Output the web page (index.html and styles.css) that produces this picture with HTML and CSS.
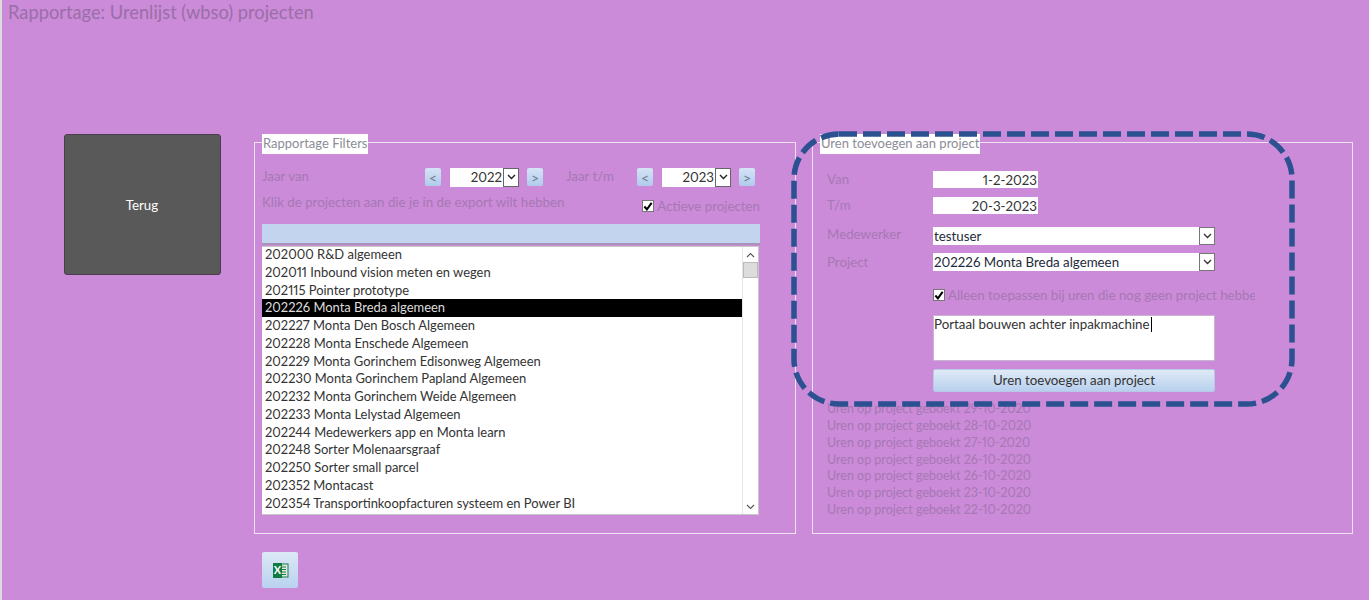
FILE: index.html
```html
<!DOCTYPE html>
<html lang="en">
  <head>
    <meta charset="UTF-8" />
    <title>Rapportage</title>
    <link rel="stylesheet" href="styles.css">
  </head>

  <body>
    <h1 class="title">Rapportage: Urenlijst (wbso) projecten</h1>

    <div class="main">
      <div class="back">Terug</div>

      <div class="left-col">
        <div class="panel">
          <div class="legend">Rapportage Filters</div>
          <div class="year-row">
            <span class="lbl year-lbl">Jaar van</span>
            <span class="step">&lt;</span>
            <span class="year-box"><span class="year-val">2022</span><span class="year-arrow"><svg width="9" height="6" viewBox="0 0 9 6"><path d="M1 1l3.5 3.5L8 1" fill="none" stroke="#222" stroke-width="1.4"/></svg></span></span>
            <span class="step">&gt;</span>
            <span class="lbl year-lbl2">Jaar t/m</span>
            <span class="step">&lt;</span>
            <span class="year-box"><span class="year-val">2023</span><span class="year-arrow"><svg width="9" height="6" viewBox="0 0 9 6"><path d="M1 1l3.5 3.5L8 1" fill="none" stroke="#222" stroke-width="1.4"/></svg></span></span>
            <span class="step">&gt;</span>
          </div>
          <div class="hint-row">
            <span class="lbl">Klik de projecten aan die je in de export wilt hebben</span>
            <span class="check-wrap">
              <span class="check"><svg width="11" height="11" viewBox="0 0 11 11"><path d="M1.5 5.5l2.8 3.2L9.5 1.5" fill="none" stroke="#000" stroke-width="2.2"/></svg></span>
              <span class="lbl">Actieve projecten</span>
            </span>
          </div>
          <div class="list-head"></div>
          <div class="list">
            <ul class="rows">
              <li>202000 R&amp;D algemeen</li>
              <li>202011 Inbound vision meten en wegen</li>
              <li>202115 Pointer prototype</li>
              <li class="sel">202226 Monta Breda algemeen</li>
              <li>202227 Monta Den Bosch Algemeen</li>
              <li>202228 Monta Enschede Algemeen</li>
              <li>202229 Monta Gorinchem Edisonweg Algemeen</li>
              <li>202230 Monta Gorinchem Papland Algemeen</li>
              <li>202232 Monta Gorinchem Weide Algemeen</li>
              <li>202233 Monta Lelystad Algemeen</li>
              <li>202244 Medewerkers app en Monta learn</li>
              <li>202248 Sorter Molenaarsgraaf</li>
              <li>202250 Sorter small parcel</li>
              <li>202352 Montacast</li>
              <li>202354 Transportinkoopfacturen systeem en Power BI</li>
            </ul>
            <div class="scroll">
              <span class="scroll-btn"><svg width="9" height="6" viewBox="0 0 9 6"><path d="M1 5l3.5-3.5L8 5" fill="none" stroke="#555" stroke-width="1.1"/></svg></span>
              <span class="thumb"></span>
              <span class="scroll-space"></span>
              <span class="scroll-btn"><svg width="9" height="6" viewBox="0 0 9 6"><path d="M1 1l3.5 3.5L8 1" fill="none" stroke="#555" stroke-width="1.1"/></svg></span>
            </div>
          </div>
        </div>

        <div class="excel-btn">
          <svg width="17" height="17" viewBox="0 0 17 17">
            <rect x="6" y="2" width="10" height="13" fill="#dfe9e2" stroke="#1d7a48"/>
            <path d="M9 5h5M9 7.5h5M9 10h5M9 12.5h5" stroke="#1d7a48"/>
            <rect x="1" y="1" width="9" height="15" fill="#107c41"/>
            <text x="5.5" y="12" class="excel-x">X</text>
          </svg>
        </div>
      </div>

      <div class="panel panel-right">
        <div class="legend">Uren toevoegen aan project</div>
        <div class="form">
          <span class="lbl lbl-date">Van</span>
          <span class="date">1-2-2023</span>
          <span class="lbl lbl-date">T/m</span>
          <span class="date">20-3-2023</span>
          <span class="lbl lbl-combo">Medewerker</span>
          <span class="combo combo-first"><span class="combo-val">testuser</span><span class="combo-arrow"><svg width="9" height="6" viewBox="0 0 9 6"><path d="M1 1l3.5 3.5L8 1" fill="none" stroke="#333" stroke-width="1.3"/></svg></span></span>
          <span class="lbl lbl-combo">Project</span>
          <span class="combo"><span class="combo-val">202226 Monta Breda algemeen</span><span class="combo-arrow"><svg width="9" height="6" viewBox="0 0 9 6"><path d="M1 1l3.5 3.5L8 1" fill="none" stroke="#333" stroke-width="1.3"/></svg></span></span>
          <span class="only-row">
            <span class="check"><svg width="11" height="11" viewBox="0 0 11 11"><path d="M1.5 5.5l2.8 3.2L9.5 1.5" fill="none" stroke="#000" stroke-width="2.2"/></svg></span>
            <span class="lbl only-text">Alleen toepassen bij uren die nog geen project hebben</span>
          </span>
          <div class="note">Portaal bouwen achter inpakmachine<span class="caret"></span></div>
          <div class="add-btn">Uren toevoegen aan project</div>
        </div>
        <ul class="log">
          <li>Uren op project geboekt 29-10-2020</li>
          <li>Uren op project geboekt 28-10-2020</li>
          <li>Uren op project geboekt 27-10-2020</li>
          <li>Uren op project geboekt 26-10-2020</li>
          <li>Uren op project geboekt 26-10-2020</li>
          <li>Uren op project geboekt 23-10-2020</li>
          <li>Uren op project geboekt 22-10-2020</li>
        </ul>
        <svg class="highlight" width="506" height="276" viewBox="0 0 506 276">
          <rect x="3" y="3" width="498" height="270" rx="45" fill="none" stroke="#2b5190" stroke-width="5.5" stroke-dasharray="18 6"/>
        </svg>
      </div>
    </div>
  </body>
</html>
```

FILE: styles.css
```css
* {
  box-sizing: border-box;
}
html,
body {
  height: 600px;
  overflow: hidden;
}
body {
  margin: 0;
  background: #cb8bd8;
  border-left: 2px solid #dcdcdc;
  font-family: Lato, "Open Sans", sans-serif;
  font-size: 13.3px;
  font-variant-numeric: proportional-nums;
  color: #333;
}
.title {
  margin: 0;
  padding: 1px 0 0 6px;
  height: 134px;
  font-size: 18.3px;
  line-height: 22px;
  font-weight: 400;
  color: #9a6ea8;
}
.main {
  display: flex;
  align-items: flex-start;
  padding-left: 62px;
}
.back {
  width: 157px;
  height: 141px;
  margin-right: 33px;
  padding: 0 1px 0 0;
  display: flex;
  align-items: center;
  justify-content: center;
  background: #595959;
  border: 1px solid #4a3d50;
  border-radius: 3px;
  color: #fff;
}
.left-col {
  width: 542px;
  margin-right: 16px;
}
.panel {
  position: relative;
  margin-top: 8px;
  width: 542px;
  height: 392px;
  padding: 0 7px;
  border: 1px solid #efe3f3;
}
.panel-right {
  width: 541px;
}
.legend {
  width: max-content;
  height: 20px;
  margin-top: -9px;
  padding: 0 1px;
  background: #fff;
  color: #8c8c96;
  font-size: 13px;
  line-height: 19px;
}
.lbl {
  color: #a678b4;
  white-space: nowrap;
}
.year-row {
  display: flex;
  align-items: center;
  height: 18px;
  margin-top: 14px;
}
.year-lbl {
  width: 163px;
  margin-top: -3px;
}
.year-lbl2 {
  width: 71px;
  margin-left: 23px;
  margin-top: -3px;
}
.step {
  width: 16px;
  height: 18px;
  display: flex;
  align-items: center;
  justify-content: center;
  background: linear-gradient(#d5e4f6, #b0cbed);
  border-radius: 2px;
  color: #6f7688;
  font-size: 14px;
}
.year-box {
  width: 69px;
  height: 19px;
  margin: 0 8px 0 9px;
  display: flex;
  background: #fff;
}
.year-val {
  flex: 1;
  padding-right: 1px;
  text-align: right;
  line-height: 19px;
  color: #333;
}
.year-arrow {
  width: 16px;
  display: flex;
  align-items: center;
  justify-content: center;
  background: #fff;
  border: 1px solid #666;
}
.hint-row {
  display: flex;
  justify-content: space-between;
  width: 498px;
  height: 21px;
  margin-top: 7px;
  line-height: 19px;
}
.check-wrap {
  display: flex;
  align-items: center;
  gap: 3px;
  margin-top: 5px;
}
.check {
  width: 12px;
  height: 12px;
  display: flex;
  align-items: center;
  justify-content: center;
  background: #fff;
  border: 1px solid #777;
}
.list-head {
  width: 498px;
  height: 21px;
  margin-top: 10px;
  background: #c3d5ee;
  border-bottom: 2px solid #a994b8;
}
.list {
  display: flex;
  width: 497px;
  height: 269px;
  margin-top: 1px;
  background: #fff;
  border: 1px solid #c8c8c8;
  border-left: 0;
}
.rows {
  flex: 1;
  margin: -1px 0 0;
  padding: 0;
  list-style: none;
  font-size: 12.95px;
  overflow: hidden;
}
.rows li {
  height: 17.75px;
  padding-left: 3px;
  line-height: 17.75px;
  white-space: nowrap;
}
.rows .sel {
  background: #000;
  color: #ddd;
}
.scroll {
  width: 16px;
  display: flex;
  flex-direction: column;
  border-left: 1px solid #e4e4e4;
}
.scroll-btn {
  height: 15px;
  display: flex;
  align-items: center;
  justify-content: center;
}
.thumb {
  height: 16px;
  background: #dcdcdc;
  border: 1px solid #bbb;
}
.scroll-space {
  flex: 1;
}
.excel-btn {
  width: 36px;
  height: 36px;
  margin: 18px 0 0 8px;
  display: flex;
  align-items: center;
  justify-content: center;
  background: linear-gradient(#dde8f5, #b9d2ef);
  border-radius: 2px;
}
.excel-x {
  fill: #fff;
  font-size: 11px;
  font-weight: 700;
  text-anchor: middle;
}
.form {
  display: grid;
  grid-template-columns: 106px 282px;
  margin: 17px 0 0 7px;
  align-items: center;
}
.lbl-date {
  margin-bottom: 6px;
  margin-top: -3px;
  line-height: 17px;
}
.date {
  width: 105px;
  height: 17px;
  margin-bottom: 9px;
  padding-right: 1px;
  background: #fff;
  text-align: right;
  line-height: 18px;
  color: #333;
}
.lbl-combo {
  margin-bottom: 8px;
  line-height: 17px;
}
.combo {
  height: 18px;
  margin-bottom: 8px;
  display: flex;
  background: #fff;
}
.combo-first {
  margin-top: 4px;
}
.combo-val {
  flex: 1;
  padding-left: 1px;
  line-height: 18px;
  color: #1d2a3a;
}
.combo-arrow {
  width: 16px;
  display: flex;
  align-items: center;
  justify-content: center;
  background: #fff;
  border: 1px solid #777;
}
.only-row {
  grid-column: 2;
  display: flex;
  align-items: center;
  gap: 3px;
  width: 322px;
  height: 18px;
  margin-top: 7px;
  overflow: hidden;
}
.note {
  grid-column: 2;
  height: 46px;
  margin-top: 11px;
  background: #fff;
  border: 1px solid #c9b3d2;
  line-height: 16px;
}
.caret {
  display: inline-block;
  width: 1px;
  height: 15px;
  margin-left: 1px;
  vertical-align: -3px;
  background: #000;
}
.add-btn {
  grid-column: 2;
  height: 23px;
  margin-top: 8px;
  background: linear-gradient(#e0eaf6, #b8d0ee);
  border: 1px solid #b7c9e6;
  border-radius: 2px;
  text-align: center;
  line-height: 20px;
}
.log {
  margin: 9px 0 0 7px;
  padding: 0;
  list-style: none;
  font-size: 12.5px;
  color: #a678b4;
}
.log li {
  height: 16.85px;
  line-height: 16.85px;
}
.highlight {
  position: absolute;
  left: -22px;
  top: -12px;
}
```
